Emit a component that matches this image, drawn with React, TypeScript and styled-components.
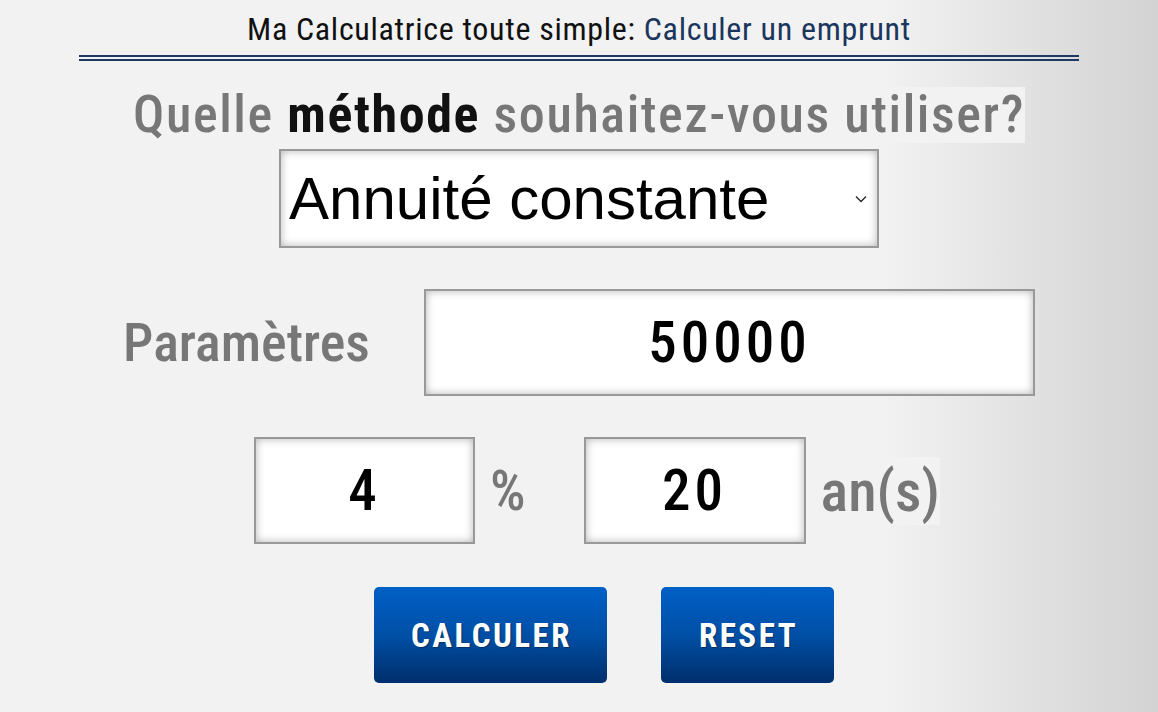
import styled, { createGlobalStyle } from "styled-components";

const techFont = `Roboto, "Open Sans", sans-serif`;

const GlobalStyle = createGlobalStyle`
  html, body {
    margin: 0;
    padding: 0;
  }
  body {
    background: linear-gradient(to right, #f2f2f2 0%, #f2f2f2 76%, #d3d3d3 100%);
    min-height: 712px;
    font-family: ${techFont};
  }
`;

const Page = styled.div`
  width: 1000px;
  margin: 0 auto;
  padding-top: 9px;
  display: flex;
  flex-direction: column;
  align-items: center;
`;

const Title = styled.h1`
  margin: 0;
  font-family: ${techFont};
  font-stretch: 80%;
  font-weight: 400;
  font-size: 32px;
  line-height: 40px;
  letter-spacing: 0.7px;
  color: #111;
`;

const TitleAccent = styled.span`
  color: #1b365d;
`;

const DoubleRule = styled.div`
  width: 100%;
  height: 2px;
  margin-top: 6px;
  border-top: 2px solid #1b3a66;
  border-bottom: 2px solid #1b3a66;
`;

const Question = styled.h2`
  margin: 26px 0 0;
  font-family: ${techFont};
  font-stretch: 80%;
  font-weight: 500;
  font-size: 52px;
  line-height: 56px;
  letter-spacing: 1.6px;
  color: #777;
  background: #f2f2f2;
`;

const Strong = styled.strong`
  color: #111;
  font-weight: 700;
`;

const SelectWrap = styled.div`
  position: relative;
  margin-top: 6px;
  width: 600px;
  height: 99px;
`;

const Select = styled.select`
  appearance: none;
  width: 100%;
  height: 100%;
  box-sizing: border-box;
  border: 2px solid #999;
  border-radius: 0;
  background: #fff;
  box-shadow: inset 0 0 8px rgba(0, 0, 0, 0.3);
  padding: 0 0 0 8px;
  font-family: "Liberation Sans", Arial, sans-serif;
  font-size: 60px;
  color: #000;
  outline: none;
`;

const Chevron = styled.svg`
  position: absolute;
  right: 12px;
  top: 46px;
  width: 12px;
  height: 8px;
  pointer-events: none;
`;

const Row = styled.div<{ $top: number; $shift?: number; $gap: number }>`
  display: flex;
  align-items: center;
  justify-content: center;
  gap: ${(p) => p.$gap}px;
  margin-top: ${(p) => p.$top}px;
  padding-left: ${(p) => p.$shift ?? 0}px;
`;

const Label = styled.span<{ $size: number }>`
  font-family: ${techFont};
  font-stretch: 75%;
  font-weight: 500;
  font-size: ${(p) => p.$size}px;
  color: #777;
  background: #f2f2f2;
`;

const Field = styled.input<{ $width: number }>`
  width: ${(p) => p.$width}px;
  height: 107px;
  box-sizing: border-box;
  border: 2px solid #999;
  background: #fff;
  box-shadow: inset 0 0 8px rgba(0, 0, 0, 0.3);
  text-align: center;
  font-family: ${techFont};
  font-stretch: 75%;
  font-weight: 500;
  font-size: 57px;
  letter-spacing: 4px;
  color: #000;
  outline: none;
  padding: 0;
`;

const Unit = styled.div<{ $offset?: number }>`
  display: flex;
  align-items: center;
  gap: 15px;
  margin-left: ${(p) => p.$offset ?? 0}px;
`;

const Button = styled.button<{ $width: number }>`
  width: ${(p) => p.$width}px;
  height: 96px;
  border: none;
  border-radius: 5px;
  background: linear-gradient(to bottom, #0060c6 0%, #004fa6 50%, #002e6c 100%);
  color: #fff;
  font-family: ${techFont};
  font-stretch: 75%;
  font-weight: 700;
  font-size: 33px;
  letter-spacing: 2.5px;
  text-shadow: 1px 1px 1px rgba(0, 0, 0, 0.35);
  padding: 0 0 0 2px;
  cursor: pointer;
`;

export default function App() {
  return (
    <>
      <GlobalStyle />
      <Page>
        <Title>
          Ma Calculatrice toute simple: <TitleAccent>Calculer un emprunt</TitleAccent>
        </Title>
        <DoubleRule />
        <Question>
          Quelle <Strong>méthode</Strong> souhaitez-vous utiliser?
        </Question>
        <SelectWrap>
          <Select defaultValue="annuite">
            <option value="annuite">Annuité constante</option>
            <option value="amortissement">Amortissement constant</option>
          </Select>
          <Chevron viewBox="0 0 12 8">
            <path d="M1 1.5 L6 6.5 L11 1.5" fill="none" stroke="#222" strokeWidth="1.3" />
          </Chevron>
        </SelectWrap>
        <Row $top={41} $gap={54}>
          <Label $size={54}>Paramètres</Label>
          <Field $width={611} defaultValue="50000" />
        </Row>
        <Row $top={41} $gap={0} $shift={36}>
          <Unit>
            <Field $width={221} defaultValue="4" />
            <Label $size={56}>%</Label>
          </Unit>
          <Unit $offset={58}>
            <Field $width={222} defaultValue="20" />
            <Label $size={58}>an(s)</Label>
          </Unit>
        </Row>
        <Row $top={43} $gap={54} $shift={50}>
          <Button $width={233}>CALCULER</Button>
          <Button $width={173}>RESET</Button>
        </Row>
      </Page>
    </>
  );
}
